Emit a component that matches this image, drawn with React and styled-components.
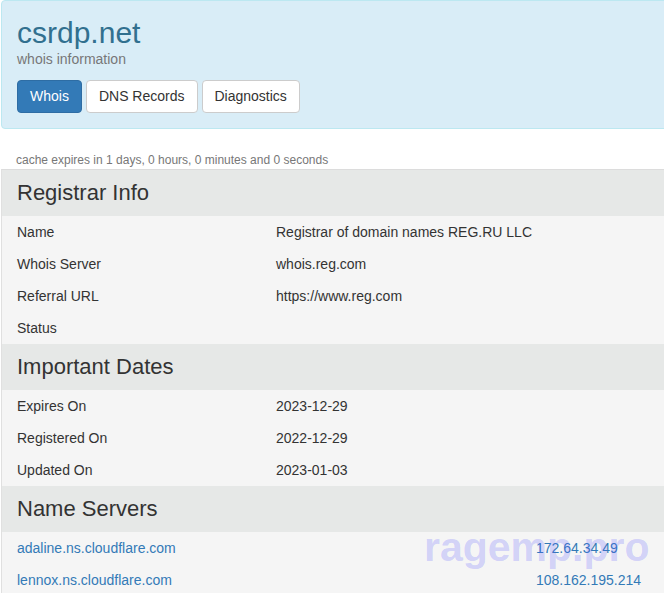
import React from 'react'
import styled, { createGlobalStyle } from 'styled-components';

const Global = createGlobalStyle`
  body {
    margin: 0;
    font-family: "Liberation Sans", Arial, sans-serif;
    font-size: 14px;
    line-height: 20px;
    color: #333;
    background: #fff;
    overflow: hidden;
  }
`;

const Jumbo = styled.div`
  margin-left: 1px;
  margin-right: -10px;
  padding: 15px;
  background: #d9edf7;
  border: 1px solid #bce8f1;
  border-radius: 4px;
`;

const Title = styled.h1`
  margin: 0;
  font-size: 30px;
  line-height: 33px;
  font-weight: 400;
  color: #31708f;
`;

const Subtitle = styled.div`
  color: #777;
  font-size: 14px;
  line-height: 20px;
`;

const Nav = styled.div`
  display: flex;
  gap: 4px;
  margin-top: 11px;
`;

const Button = styled.button`
  font-family: inherit;
  font-size: 14px;
  line-height: 19px;
  padding: 6px 12px;
  border-radius: 4px;
  border: 1px solid ${p => (p.$active ? '#2e6da4' : '#ccc')};
  background: ${p => (p.$active ? '#337ab7' : '#fff')};
  color: ${p => (p.$active ? '#fff' : '#333')};
  cursor: pointer;
`;

const Cache = styled.div`
  margin-top: 22px;
  padding-left: 16px;
  font-size: 12px;
  line-height: 18px;
  color: #777;
`;

const Well = styled.div`
  margin-left: 1px;
  border-top: 1px solid #dcdcdc;
  border-left: 1px solid #e0e0e0;
  background: #f5f5f5;
`;

const Section = styled.div`
  position: relative;
`;

const SectionHead = styled.h3`
  margin: 0;
  height: 46px;
  display: flex;
  align-items: center;
  padding-left: 15px;
  background: #e6e8e7;
  font-size: 22px;
  font-weight: 400;
  color: #333;
`;

const Row = styled.div`
  display: grid;
  grid-template-columns: ${p => p.$label || '259px'} 1fr;
  height: 32px;
  align-items: center;
  padding-left: 15px;
  padding-right: 24px;
`;

const Link = styled.a`
  color: #337ab7;
  text-decoration: none;
`;

const Watermark = styled.div`
  position: absolute;
  top: 37px;
  left: 422px;
  font-size: 41px;
  font-weight: 700;
  line-height: 48px;
  color: rgba(90, 90, 255, 0.24);
  pointer-events: none;
`;

const registrar = [
  ['Name', 'Registrar of domain names REG.RU LLC'],
  ['Whois Server', 'whois.reg.com'],
  ['Referral URL', 'https://www.reg.com'],
  ['Status', ''],
];

const dates = [
  ['Expires On', '2023-12-29'],
  ['Registered On', '2022-12-29'],
  ['Updated On', '2023-01-03'],
];

const servers = [
  ['adaline.ns.cloudflare.com', '172.64.34.49'],
  ['lennox.ns.cloudflare.com', '108.162.195.214'],
];

function App() {
  return (
    <>
      <Global />
      <Jumbo>
        <Title>csrdp.net</Title>
        <Subtitle>whois information</Subtitle>
        <Nav>
          <Button $active>Whois</Button>
          <Button>DNS Records</Button>
          <Button>Diagnostics</Button>
        </Nav>
      </Jumbo>
      <Cache>cache expires in 1 days, 0 hours, 0 minutes and 0 seconds</Cache>
      <Well>
        <Section>
          <SectionHead>Registrar Info</SectionHead>
          {registrar.map(([k, v]) => (
            <Row key={k}><span>{k}</span><span>{v}</span></Row>
          ))}
        </Section>
        <Section>
          <SectionHead>Important Dates</SectionHead>
          {dates.map(([k, v]) => (
            <Row key={k}><span>{k}</span><span>{v}</span></Row>
          ))}
        </Section>
        <Section>
          <SectionHead>Name Servers</SectionHead>
          {servers.map(([host, ip]) => (
            <Row key={host} $label="519px">
              <Link href="#">{host}</Link>
              <Link href="#">{ip}</Link>
            </Row>
          ))}
          <Watermark>ragemp.pro</Watermark>
        </Section>
      </Well>
    </>
  )
}

export default App
